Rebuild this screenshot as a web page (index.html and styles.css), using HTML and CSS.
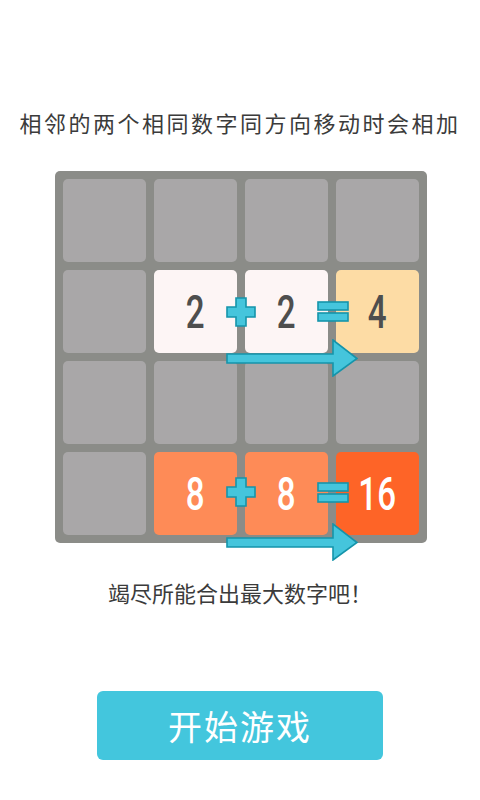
FILE: index.html
```html
<!DOCTYPE html>
<html lang="zh-CN">
<head>
<meta charset="UTF-8">
<meta name="viewport" content="width=device-width, initial-scale=1.0">
<title>2048 玩法说明</title>
<link rel="stylesheet" href="styles.css">
</head>
<body>

<p class="intro">相邻的两个相同数字同方向移动时会相加</p>

<div class="board">
  <div class="tile"></div>
  <div class="tile"></div>
  <div class="tile"></div>
  <div class="tile"></div>

  <div class="tile"></div>
  <div class="tile tile-2"><span class="num">2</span></div>
  <div class="tile tile-2"><span class="num">2</span></div>
  <div class="tile tile-4"><span class="num">4</span></div>

  <div class="tile"></div>
  <div class="tile"></div>
  <div class="tile"></div>
  <div class="tile"></div>

  <div class="tile"></div>
  <div class="tile tile-8"><span class="num">8</span></div>
  <div class="tile tile-8"><span class="num">8</span></div>
  <div class="tile tile-16"><span class="num">16</span></div>

  <!-- 2 + 2 = 4 -->
  <svg class="op plus row-b" width="30" height="30" viewBox="0 0 30 30">
    <path d="M10 1H20V10H29V20H20V29H10V20H1V10H10Z"/>
  </svg>
  <svg class="op equals row-b" width="32" height="21" viewBox="0 0 32 21">
    <rect x="1" y="1" width="30" height="8"/>
    <rect x="1" y="12" width="30" height="8"/>
  </svg>
  <svg class="op arrow arrow-b" width="132" height="38" viewBox="0 0 132 38">
    <path d="M1 15H107V1L131 19.5L107 37V24H1Z"/>
  </svg>

  <!-- 8 + 8 = 16 -->
  <svg class="op plus row-d" width="30" height="30" viewBox="0 0 30 30">
    <path d="M10 1H20V10H29V20H20V29H10V20H1V10H10Z"/>
  </svg>
  <svg class="op equals row-d" width="32" height="21" viewBox="0 0 32 21">
    <rect x="1" y="1" width="30" height="8"/>
    <rect x="1" y="12" width="30" height="8"/>
  </svg>
  <svg class="op arrow arrow-d" width="132" height="38" viewBox="0 0 132 38">
    <path d="M1 15H107V1L131 19.5L107 37V24H1Z"/>
  </svg>
</div>

<p class="hint">竭尽所能合出最大数字吧！</p>

<button class="start">开始游戏</button>

</body>
</html>
```

FILE: styles.css
```css
body {
  margin: 0;
  background-color: #fff;
  color: #3b3b3b;
  font-family: "Noto Sans CJK SC", "Noto Sans", sans-serif;
  display: flex;
  flex-direction: column;
  align-items: center;
}
.intro {
  margin: 110px 0 0;
  font-size: 22px;
  line-height: 24px;
  letter-spacing: 2.5px;
}
.board {
  position: relative;
  margin-top: 37px;
  margin-left: 2px;
  padding: 8px;
  background-color: #8b8c88;
  border-radius: 5px;
  display: grid;
  grid-template-columns: repeat(4, 83px);
  grid-auto-rows: 83px;
  gap: 8px;
}
.tile {
  background-color: #a9a7a8;
  border-radius: 5px;
  display: flex;
  align-items: center;
  justify-content: center;
}
.tile-2 {
  background-color: #fdf5f5;
}
.tile-4 {
  background-color: #fddca5;
}
.tile-8 {
  background-color: #fe8b57;
}
.tile-16 {
  background-color: #fe6427;
}
.num {
  display: inline-block;
  font-family: Roboto, "Liberation Sans", sans-serif;
  font-size: 46px;
  font-weight: 500;
  line-height: 1;
  color: #4e4e4e;
  transform: scaleX(0.72);
}
.tile-8 .num,
.tile-16 .num {
  color: #fff;
}
/* operators and arrows drawn over the tiles */
.op {
  position: absolute;
  fill: #45c5dc;
  stroke: #1594aa;
  stroke-width: 1.6;
}
.plus {
  left: 171px;
}
.equals {
  left: 262px;
}
.plus.row-b {
  top: 126px;
}
.equals.row-b {
  top: 130px;
}
.plus.row-d {
  top: 306px;
}
.equals.row-d {
  top: 311px;
}
.arrow {
  left: 171px;
}
.arrow-b {
  top: 168px;
}
.arrow-d {
  top: 352px;
}
.hint {
  margin: 38px 0 0;
  font-size: 22px;
  line-height: 22px;
}
.start {
  margin-top: 88px;
  width: 286px;
  height: 69px;
  border: none;
  border-radius: 6px;
  background-color: #43c6dd;
  color: #fff;
  font-family: "Noto Sans CJK SC", sans-serif;
  font-size: 34px;
  letter-spacing: 2px;
  cursor: pointer;
}
```
